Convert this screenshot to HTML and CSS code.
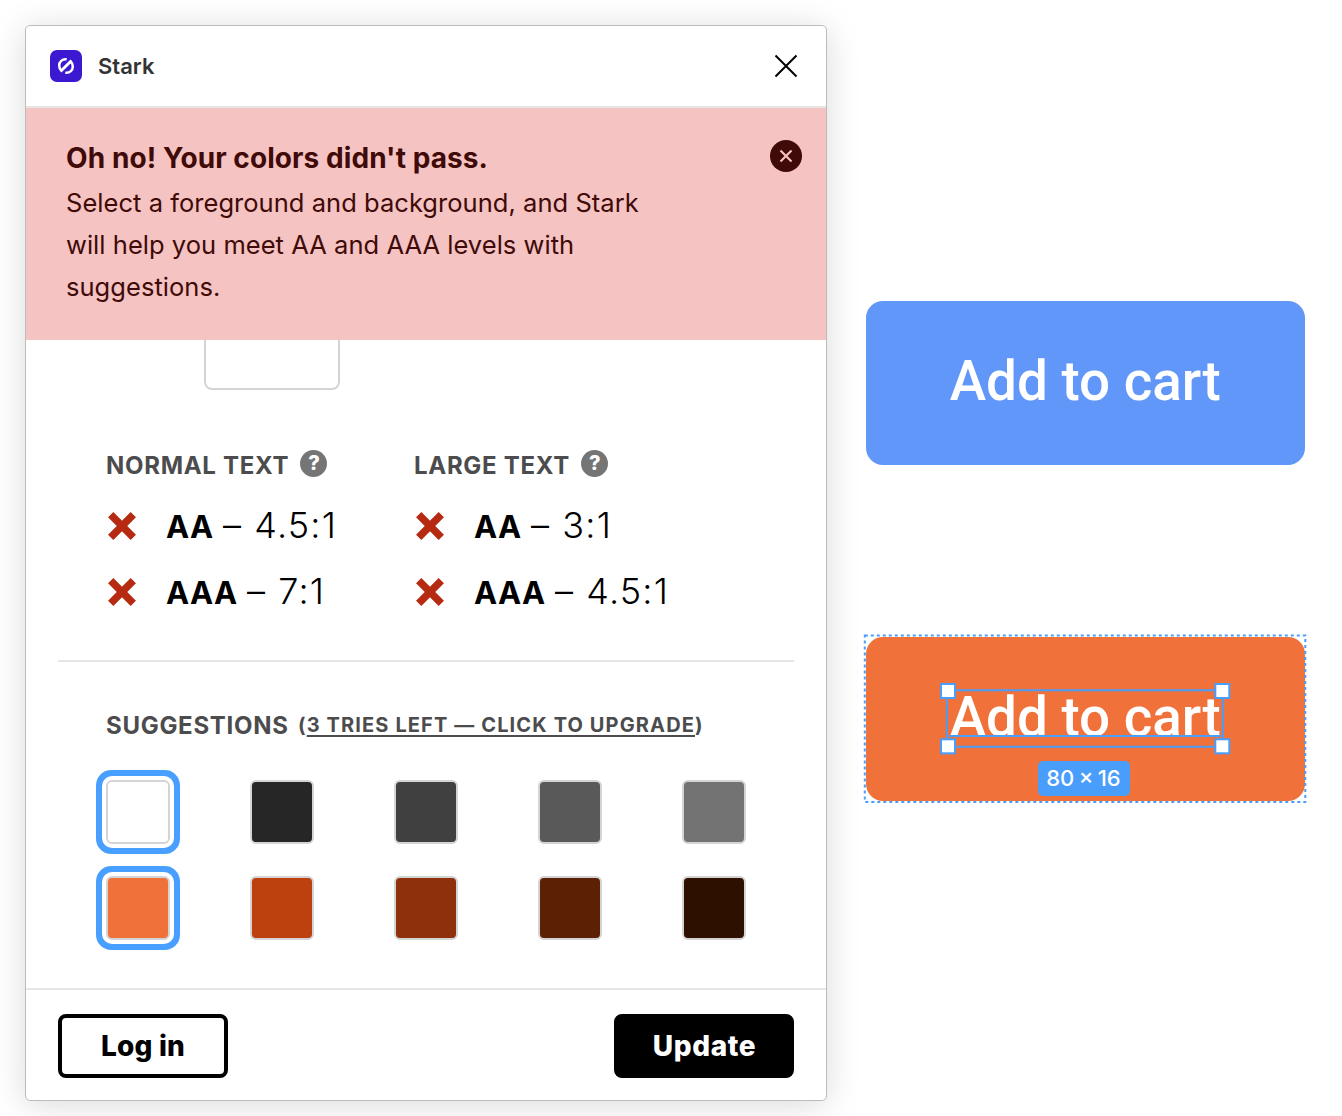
FILE: index.html
```html
<!DOCTYPE html>
<html lang="en">
<head>
<meta charset="utf-8">
<title>Stark</title>
<link rel="stylesheet" href="styles.css">
</head>
<body>
<main class="stage">
  <section class="panel">
    <header class="header">
      <svg class="logo" viewBox="0 0 32 32" width="32" height="32">
        <rect width="32" height="32" rx="7" fill="#3c19d1"/>
        <g fill="none" stroke="#fff" stroke-width="2.5">
          <path d="M16.700 9.200C12 8.700 9.200 12 9.200 15.500c0 2.200.8 3.900 2.100 5.200L21 11.200"/>
          <path d="M15.300 22.800c4.700.5 7.500-2.800 7.500-6.300 0-2.200-.8-3.900-2.100-5.200L11 20.800"/>
        </g>
      </svg>
      <h1 class="title">Stark</h1>
      <svg class="close" viewBox="0 0 24 24" width="24" height="24"><path d="M1.500 1.500l21 21M22.500 1.500l-21 21" stroke="#000" stroke-width="2" fill="none"/></svg>
    </header>
    <div class="alert">
      <div class="alert-copy">
        <h2 class="alert-title">Oh no! Your colors didn't pass.</h2>
        <p class="alert-text">Select a foreground and background, and Stark<br>will help you meet AA and AAA levels with<br>suggestions.</p>
      </div>
      <svg class="dismiss" viewBox="0 0 32 32" width="32" height="32"><circle cx="16" cy="16" r="16" fill="#3f0a07"/><path d="M10.500 10.500l11 11M21.500 10.500l-11 11" stroke="#f4c3c2" stroke-width="2.200" fill="none"/></svg>
    </div>
    <div class="body">
      <div class="preview"></div>
      <div class="results">
        <div class="result">
          <h3 class="label"><span>NORMAL TEXT</span><i class="help">?</i></h3>
          <p class="level"><svg class="fail" viewBox="0 0 28 28"><path d="M2.700 2.700l22.600 22.600M25.300 2.700L2.700 25.300"/></svg><b>AA</b><span class="ratio">– 4.5:1</span></p>
          <p class="level"><svg class="fail" viewBox="0 0 28 28"><path d="M2.700 2.700l22.600 22.600M25.300 2.700L2.700 25.300"/></svg><b>AAA</b><span class="ratio">– 7:1</span></p>
        </div>
        <div class="result">
          <h3 class="label"><span>LARGE TEXT</span><i class="help">?</i></h3>
          <p class="level"><svg class="fail" viewBox="0 0 28 28"><path d="M2.700 2.700l22.600 22.600M25.300 2.700L2.700 25.300"/></svg><b>AA</b><span class="ratio">– 3:1</span></p>
          <p class="level"><svg class="fail" viewBox="0 0 28 28"><path d="M2.700 2.700l22.600 22.600M25.300 2.700L2.700 25.300"/></svg><b>AAA</b><span class="ratio">– 4.5:1</span></p>
        </div>
      </div>
      <div class="suggestions">
        <h3 class="label label-suggest"><span>SUGGESTIONS</span><small class="tries">(<a class="upgrade">3 TRIES LEFT — CLICK TO UPGRADE</a>)</small></h3>
        <div class="swatches">
          <i class="swatch selected white"></i><i class="swatch g1"></i><i class="swatch g2"></i><i class="swatch g3"></i><i class="swatch g4"></i>
          <i class="swatch selected orange"></i><i class="swatch o1"></i><i class="swatch o2"></i><i class="swatch o3"></i><i class="swatch o4"></i>
        </div>
      </div>
    </div>
    <footer class="footer">
      <button class="btn btn-outline">Log in</button>
      <button class="btn btn-solid">Update</button>
    </footer>
  </section>
  <section class="canvas">
    <div class="cart cart-blue"><span class="cart-text">Add to cart</span></div>
    <div class="cart cart-orange">
      <span class="cart-text">Add to cart</span>
      <svg class="selection" viewBox="0 0 444 170" width="444" height="170">
        <g fill="none" stroke="#499dfb">
          <rect x="1.800" y="1.500" width="440.500" height="166.500" stroke-width="2" stroke-dasharray="3 3"/>
          <path d="M83.800 56.300H359.800V112.800H83.800ZM86 102H358" stroke-width="2"/>
          <g fill="#fff" stroke-width="2">
            <rect x="78" y="50" width="14" height="14"/><rect x="352.300" y="50" width="14" height="14"/>
            <rect x="78" y="105.300" width="14" height="14"/><rect x="352.300" y="105.300" width="14" height="14"/>
          </g>
        </g>
      </svg>
      <span class="size">80 × 16</span>
    </div>
  </section>
</main>
</body>
</html>
```
FILE: styles.css
```css
* { box-sizing: border-box; margin: 0; padding: 0; }
body { background: #fff; font-family: Inter, "Liberation Sans", sans-serif; height: 1116px; overflow: hidden; }
.stage { display: flex; gap: 39px; padding: 25px; height: 1116px; }
.panel { display: flex; flex-direction: column; flex: none; width: 802px; height: 1076px; border: 1px solid #bcbcbc; border-radius: 5px; background: #fff; box-shadow: 0 4px 34px rgba(0, 0, 0, .15); overflow: hidden; }
.header { display: flex; align-items: center; height: 82px; padding: 0 28px 0 24px; border-bottom: 2px solid #e5e5e5; }
.title { flex: 1; margin-left: 16px; font-size: 22px; font-weight: 600; color: #333; }
.alert { display: flex; justify-content: space-between; height: 232px; padding: 32px 24px 0 40px; background: #f4c3c2; color: #3f0a07; }
.alert-title { font-size: 28px; line-height: 36px; font-weight: 700; letter-spacing: .08px; white-space: nowrap; }
.alert-text { margin-top: 6px; font-size: 25.500px; line-height: 42px; letter-spacing: .040px; white-space: nowrap; }
.body { flex: 1; padding: 0 32px; }
.preview { width: 136px; height: 50px; margin-left: 146px; border: 2px solid #d4d4d4; border-top: 0; border-radius: 0 0 8px 8px; }
.results { display: grid; grid-template-columns: 308px 308px; height: 272px; padding: 58px 0 0 48px; border-bottom: 2px solid #e5e5e5; }
.label { display: flex; align-items: center; height: 34px; font-size: 24px; font-weight: 700; letter-spacing: .7px; color: #4c4c4e; white-space: nowrap; }
.help { display: flex; align-items: center; justify-content: center; width: 27px; height: 27px; margin: -4px 0 0 11.300px; border-radius: 50%; background: #757575; color: #fff; font-size: 20px; font-style: normal; font-weight: 800; letter-spacing: 0; }
.level { display: flex; align-items: baseline; position: relative; height: 66px; padding-left: 60px; font-size: 36px; line-height: 66px; white-space: nowrap; top: 10px; }
.level b { font-size: 31px; letter-spacing: .4px; margin-right: 9.400px; }
.ratio { font-weight: 300; letter-spacing: 1.200px; word-spacing: .8px; }
.fail { position: absolute; left: 2px; top: 20px; width: 28px; height: 28px; stroke: #b62a12; stroke-width: 7.500; }
.suggestions { padding: 46px 0 0 48px; }
.tries { margin-left: 9.500px; font-size: 20px; letter-spacing: 1.120px; }
.upgrade { text-decoration: underline; text-decoration-thickness: 2px; text-underline-offset: 3px; }
.swatches { display: grid; grid-template-columns: repeat(5, 144px); row-gap: 32px; margin-top: 38px; }
.swatch { width: 64px; height: 64px; border: 2px solid #d4d4d4; border-radius: 6px; }
.selected { box-shadow: 0 0 0 4px #fff, 0 0 0 10px #489fff; }
.white { background: #fff; }
.g1 { background: #262626; }
.g2 { background: #404040; }
.g3 { background: #595959; }
.g4 { background: #737373; }
.orange { background: #f0723a; }
.o1 { background: #bd410f; }
.o2 { background: #8d300b; }
.o3 { background: #5c2005; }
.o4 { background: #2e1001; }
.footer { display: flex; justify-content: space-between; height: 112px; padding: 24px 32px; border-top: 2px solid #e5e5e5; }
.btn { height: 64px; border: 4px solid #000; border-radius: 8px; font: 800 28px/56px Inter, sans-serif; letter-spacing: .2px; }
.btn-outline { width: 170px; background: #fff; color: #000; }
.btn-solid { width: 180px; padding-left: 1px; background: #000; color: #fff; letter-spacing: .6px; }
.canvas { display: flex; flex-direction: column; gap: 172px; padding-top: 276px; flex: none; width: 438.500px; }
.cart { position: relative; display: flex; align-items: center; justify-content: center; height: 164px; border-radius: 17px; color: #fff; font: 500 54.800px/64px Roboto, sans-serif; white-space: nowrap; }
.cart-blue { background: #6197f8; }
.cart-orange { background: #f0723a; }
.cart-text { padding-bottom: 4px; }
.selection { position: absolute; left: -3px; top: -3px; }
.size { position: absolute; left: 171.500px; top: 124px; width: 92px; height: 35px; border-radius: 5px; background: #499dfb; font: 500 22px/35px Inter, sans-serif; word-spacing: -1.500px; text-align: center; }
```
